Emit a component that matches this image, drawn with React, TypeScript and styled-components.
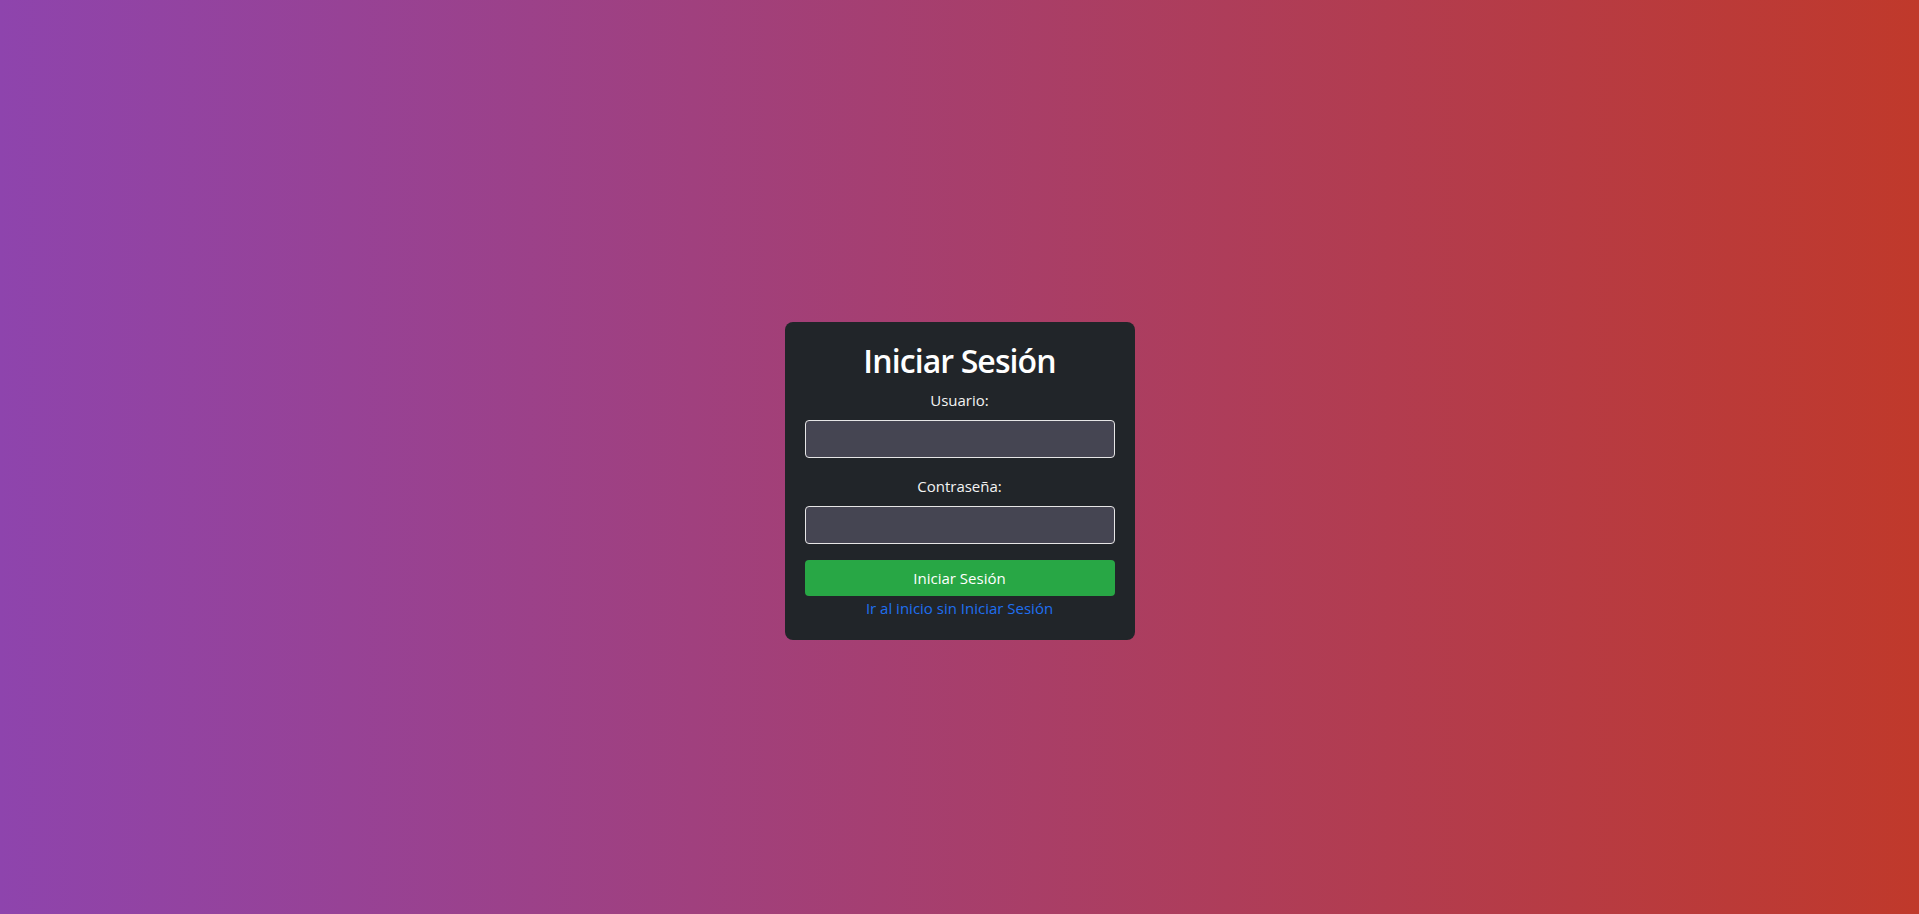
import React from "react";
import styled, { createGlobalStyle } from "styled-components";

const Global = createGlobalStyle`
  html, body { margin: 0; padding: 0; height: 100%; }
  body {
    font-family: "Open Sans", "Noto Sans", sans-serif;
    background: linear-gradient(to right, #8e44ad, #c0392b);
  }
  #root { height: 100%; }
`;

const Page = styled.div`
  height: 914px;
  display: flex;
  align-items: center;
  justify-content: center;
  box-sizing: border-box;
  padding-top: 48px;
`;

const Card = styled.form`
  width: 350px;
  box-sizing: border-box;
  background: #212529;
  border-radius: 8px;
  padding: 20px;
  display: flex;
  flex-direction: column;
  align-items: stretch;
  text-align: center;
  color: #fff;
`;

const Title = styled.h1`
  margin: 0 0 8px;
  font-size: 32px;
  line-height: 38.4px;
  font-weight: 600;
  letter-spacing: -0.9px;
  color: #fff;
`;

const Label = styled.label`
  display: block;
  font-size: 15px;
  line-height: 24px;
  margin-bottom: 8px;
  color: #f3f3f3;
`;

const Input = styled.input`
  display: block;
  box-sizing: border-box;
  width: 100%;
  height: 38px;
  margin: 0 0 16px;
  background: #454552;
  border: 1px solid #e6e6e6;
  border-radius: 4px;
  color: #fff;
  font-size: 16px;
  padding: 6px 12px;
  outline: none;
  font-family: inherit;
`;

const Button = styled.button`
  height: 36px;
  width: 100%;
  background: #28a745;
  border: none;
  border-radius: 4px;
  color: #fff;
  font-size: 15px;
  font-family: inherit;
  cursor: pointer;
`;

const Link = styled.a`
  display: block;
  font-size: 15px;
  line-height: 24px;
  color: #1f6ff0;
  text-decoration: none;
`;

export default function App() {
  return (
    <>
      <Global />
      <Page>
        <Card onSubmit={(e) => e.preventDefault()}>
          <Title>Iniciar Sesión</Title>
          <Label htmlFor="usuario">Usuario:</Label>
          <Input id="usuario" type="text" />
          <Label htmlFor="pass">Contraseña:</Label>
          <Input id="pass" type="password" />
          <Button type="submit">Iniciar Sesión</Button>
          <Link href="#">Ir al inicio sin Iniciar Sesión</Link>
        </Card>
      </Page>
    </>
  );
}
